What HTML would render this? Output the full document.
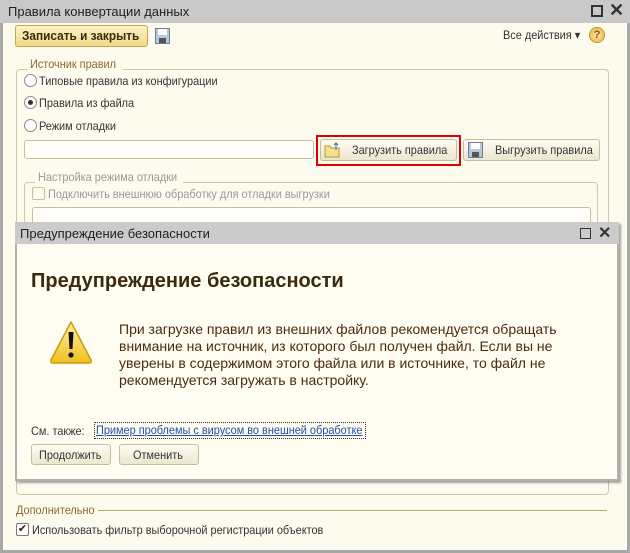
<!DOCTYPE html>
<html><head><meta charset="utf-8">
<style>
*{box-sizing:border-box;margin:0;padding:0}
body{width:630px;height:553px;overflow:hidden;background:#fbf9ee;font-family:"Liberation Sans",Arial,sans-serif;font-size:12px;color:#333;position:relative}
.a{position:absolute;white-space:nowrap}
.n{transform:scaleX(.91);transform-origin:left top}
.win{position:absolute;left:0;top:0;width:630px;height:553px;border:3px solid #a8a8a8;border-top:none;background:#fdfaee}
.tb{position:absolute;left:0;top:0;width:630px;height:23px;background:#c9c9c9}
.btn{position:absolute;border:1px solid #c6bd9c;border-radius:3px;background:linear-gradient(#fffdf3,#ece6cf);color:#333}
.grp{position:absolute;border:1px solid #cfc7a6;border-radius:4px}
.leg{position:absolute;background:#fdfaee;padding:0 3px;color:#8a6a30}
.radio{position:absolute;width:13px;height:13px;border:1px solid #8a8a8a;border-radius:50%;background:#fff}
.inp{position:absolute;border:1px solid #c6bd9c;border-radius:3px;background:#fffef8}
</style></head><body>
<div class="win"></div>
<div class="tb"></div>
<div class="a" style="left:8px;top:4px;font-size:13px;color:#222">Правила конвертации данных</div>
<div class="a" style="left:591px;top:5px;width:12px;height:12px;border:2px solid #333"></div>
<div class="a" style="left:609px;top:0px;font-size:18px;font-weight:bold;color:#333">✕</div>

<div class="btn" style="left:15px;top:25px;width:133px;height:22px;background:linear-gradient(#fff3c4,#f1d98a);border-color:#c8a650"></div>
<div class="a n" style="left:22px;top:28px;font-weight:bold;font-size:13px;color:#3a2a10">Записать и закрыть</div>
<svg class="a" style="left:155px;top:28px" width="15" height="16"><rect x="0.5" y="0.5" width="14" height="15" fill="#b7c8dc" stroke="#6a7f99"/><rect x="3" y="1" width="9" height="6" fill="#fff"/><rect x="4" y="10" width="7" height="5" fill="#555"/></svg>
<div class="a n" style="left:503px;top:28px;color:#333">Все действия ▾</div>
<div class="a" style="left:589px;top:27px;width:16px;height:16px;border-radius:50%;background:radial-gradient(#ffe9a8,#e8b040);border:1px solid #c8942a;text-align:center;font-size:11px;line-height:14px;color:#8a5a10;font-weight:bold">?</div>

<div class="grp" style="left:16px;top:69px;width:593px;height:426px"></div>
<div class="leg" style="left:27px;top:57px;width:96px"><span class="a n" style="left:3px;top:0">Источник правил</span>&nbsp;</div>
<div class="radio" style="left:24px;top:74px"></div><div class="a n" style="left:39px;top:74px">Типовые правила из конфигурации</div>
<div class="radio" style="left:24px;top:96px"></div><div class="a" style="left:28px;top:100px;width:5px;height:5px;border-radius:50%;background:#333"></div><div class="a n" style="left:39px;top:96px">Правила из файла</div>
<div class="radio" style="left:24px;top:119px"></div><div class="a n" style="left:39px;top:119px">Режим отладки</div>
<div class="inp" style="left:24px;top:140px;width:290px;height:19px"></div>
<div class="a" style="left:316px;top:135px;width:145px;height:31px;border:2px solid #e00000"></div>
<div class="btn" style="left:320px;top:139px;width:137px;height:22px"></div>
<div class="a n" style="left:352px;top:143px">Загрузить правила</div>
<svg class="a" style="left:324px;top:142px" width="17" height="16"><path d="M1 4h5l1 2h8v9H1z" fill="#f5df8a" stroke="#b89a3a"/><path d="M12 8V1M10 3l2-2 2 2" stroke="#3a6ab0" fill="none"/></svg>
<div class="btn" style="left:463px;top:139px;width:137px;height:22px"></div>
<div class="a n" style="left:495px;top:143px">Выгрузить правила</div>
<svg class="a" style="left:468px;top:142px" width="15" height="16"><rect x="0.5" y="0.5" width="14" height="15" fill="#b7c8dc" stroke="#6a7f99"/><rect x="3" y="1" width="9" height="6" fill="#fff"/><rect x="4" y="10" width="7" height="5" fill="#555"/></svg>

<div class="grp" style="left:24px;top:182px;width:574px;height:60px"></div>
<div class="leg" style="left:35px;top:170px;width:148px;color:#999"><span class="a n" style="left:3px;top:0">Настройка режима отладки</span>&nbsp;</div>
<div class="a" style="left:32px;top:187px;width:13px;height:13px;border:1px solid #c8c0a8;border-radius:2px"></div>
<div class="a n" style="left:48px;top:187px;color:#999">Подключить внешнюю обработку для отладки выгрузки</div>
<div class="inp" style="left:32px;top:207px;width:559px;height:20px"></div>

<!-- dialog -->
<div class="a" style="left:15px;top:222px;width:604px;height:259px;border:2px solid #b0b0b0;background:#fffcf1;box-shadow:2px 2px 2px rgba(0,0,0,.35)"></div>
<div class="a" style="left:15px;top:222px;width:604px;height:22px;background:#cbcbcb"></div>
<div class="a" style="left:20px;top:226px;font-size:13px;color:#222">Предупреждение безопасности</div>
<div class="a" style="left:580px;top:228px;width:11px;height:11px;border:1.5px solid #333"></div>
<div class="a" style="left:598px;top:223px;font-size:16px;font-weight:bold;color:#333">✕</div>
<div class="a" style="left:31px;top:270px;font-size:20px;font-weight:bold;color:#3a2a10">Предупреждение безопасности</div>
<svg class="a" style="left:49px;top:320px" width="44" height="45"><defs><linearGradient id="g" x1="0" y1="0" x2="0" y2="1"><stop offset="0" stop-color="#fff2a0"/><stop offset="1" stop-color="#f0c020"/></linearGradient></defs><path d="M22 2 L42 40 Q43 43 40 43 L4 43 Q1 43 2 40 Z" fill="url(#g)" stroke="#c89a10" stroke-width="1.5" stroke-linejoin="round"/><path d="M19.5 12h5l-1 17h-3z" fill="#111"/><circle cx="22" cy="35" r="2.6" fill="#111"/></svg>
<div class="a" style="left:119px;top:321px;font-size:14px;line-height:17px;color:#4a2c10">При загрузке правил из внешних файлов рекомендуется обращать<br>внимание на источник, из которого был получен файл. Если вы не<br>уверены в содержимом этого файла или в источнике, то файл не<br>рекомендуется загружать в настройку.</div>
<div class="a n" style="left:31px;top:424px;color:#333">См. также:</div>
<div class="a" style="left:95px;top:423px;width:270px;height:15px;outline:1px dotted #333"></div>
<div class="a n" style="left:96px;top:423px;color:#1f4fa8;text-decoration:underline">Пример проблемы с вирусом во внешней обработке</div>
<div class="btn" style="left:31px;top:444px;width:80px;height:21px"></div>
<div class="a n" style="left:39px;top:448px">Продолжить</div>
<div class="btn" style="left:119px;top:444px;width:80px;height:21px"></div>
<div class="a n" style="left:133px;top:448px">Отменить</div>

<div class="a n" style="left:16px;top:503px;color:#8a6a30">Дополнительно</div>
<div class="a" style="left:98px;top:510px;width:509px;height:1px;background:#b8a878"></div>
<div class="a" style="left:16px;top:523px;width:13px;height:13px;border:1px solid #777;border-radius:2px;background:#fff;font-size:11px;line-height:11px;text-align:center;color:#222">✔</div>
<div class="a n" style="left:32px;top:523px;color:#333">Использовать фильтр выборочной регистрации объектов</div>
</body></html>
